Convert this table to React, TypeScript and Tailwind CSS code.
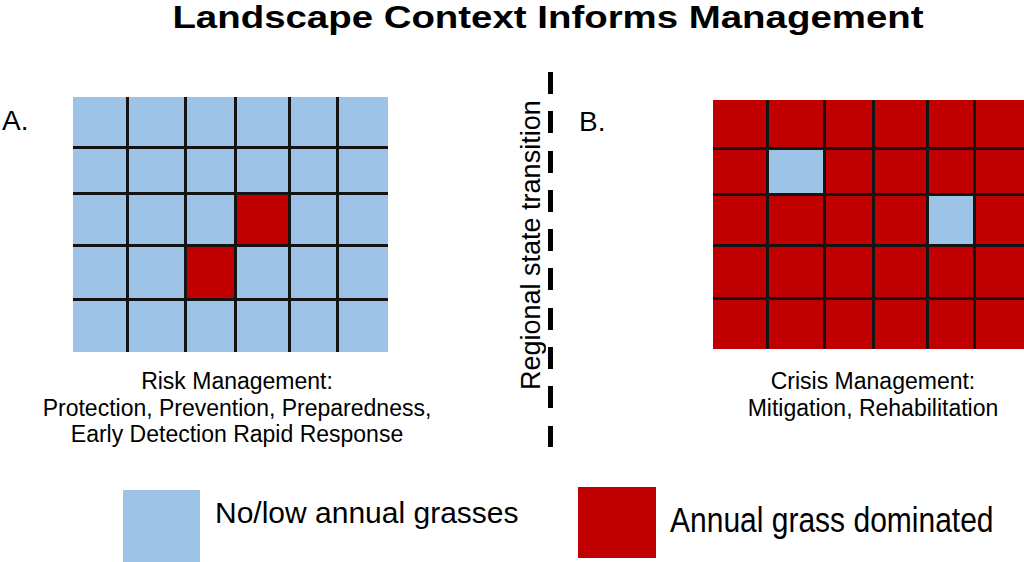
const BLUE = 'bg-[#9dc3e6]';
const RED = 'bg-[#c00000]';

type Cell = 'b' | 'r';

const gridA: Cell[][] = [
  ['b', 'b', 'b', 'b', 'b', 'b'],
  ['b', 'b', 'b', 'b', 'b', 'b'],
  ['b', 'b', 'b', 'r', 'b', 'b'],
  ['b', 'b', 'r', 'b', 'b', 'b'],
  ['b', 'b', 'b', 'b', 'b', 'b'],
];

const gridB: Cell[][] = [
  ['r', 'r', 'r', 'r', 'r', 'r'],
  ['r', 'b', 'r', 'r', 'r', 'r'],
  ['r', 'r', 'r', 'r', 'b', 'r'],
  ['r', 'r', 'r', 'r', 'r', 'r'],
  ['r', 'r', 'r', 'r', 'r', 'r'],
];

function Landscape({ cells, className }: { cells: Cell[][]; className: string }) {
  // black grid lines come from the gap showing the background
  return (
    <div className={`grid gap-[3px] bg-[#141414] ${className}`}>
      {cells.flat().map((c, i) => (
        <div key={i} className={c === 'r' ? RED : BLUE} />
      ))}
    </div>
  );
}

export default function App() {
  return (
    <div className="w-[1024px] h-[562px] overflow-hidden bg-white text-black font-['Liberation_Sans',Arial,sans-serif]">
      {/* Title */}
      <div className="h-[72px] flex justify-center pl-[72px] pt-[1px]">
        <h1 className="text-[32px] leading-none font-bold scale-x-[1.2] whitespace-nowrap">
          Landscape Context Informs Management
        </h1>
      </div>

      {/* Panels */}
      <div className="h-[415px] flex items-start">
        <div className="w-[73px] shrink-0 pl-[2px] mt-[35px] text-[28px] leading-none">A.</div>

        <div className="w-[315px] shrink-0 mt-[25px]">
          <Landscape
            cells={gridA}
            className="w-[315px] h-[255px] grid-cols-[53px_55px_47px_51px_45px_49px] grid-rows-[49px_43px_49px_51px_51px]"
          />
          <div className="w-[400px] -ml-[36px] mt-[16px] text-center text-[23px] leading-[26.5px] whitespace-nowrap">
            <p>Risk Management:</p>
            <p>Protection, Prevention, Preparedness,</p>
            <p>Early Detection Rapid Response</p>
          </div>
        </div>

        <div className="w-[191px] shrink-0 flex items-start">
          <div className="ml-[130px] mt-[30px] h-[288px] w-[27px] text-[27px] leading-none whitespace-nowrap [writing-mode:vertical-rl] rotate-180">
            Regional state transition
          </div>
          <div className="ml-[3px] w-[5px] h-[375px] bg-[repeating-linear-gradient(to_bottom,#000_0px,#000_22px,transparent_22px,transparent_39.3px)]" />
        </div>

        <div className="w-[134px] shrink-0 mt-[36px] text-[28px] leading-none">B.</div>

        <div className="w-[311px] shrink-0 mt-[28px]">
          <Landscape
            cells={gridB}
            className="w-[311px] h-[249px] grid-cols-[53px_54px_46px_51px_44px_48px] grid-rows-[47px_43px_48px_50px_49px]"
          />
          <div className="mt-[19px] pl-[9px] text-center text-[23px] leading-[26.5px] whitespace-nowrap">
            <p>Crisis Management:</p>
            <p>Mitigation, Rehabilitation</p>
          </div>
        </div>
      </div>

      {/* Legend */}
      <div className="flex items-start pl-[123px]">
        <div className="w-[455px] shrink-0 flex items-start">
          <div className={`w-[77px] h-[72px] mt-[3px] ${BLUE}`} />
          <span className="ml-[15px] mt-[11px] text-[30px] leading-none whitespace-nowrap">
            No/low annual grasses
          </span>
        </div>
        <div className={`w-[78px] h-[71px] ${RED}`} />
        <span className="ml-[14px] mt-[18px] text-[30px] leading-none whitespace-nowrap scale-y-[1.17]">
          Annual grass dominated
        </span>
      </div>
    </div>
  );
}
